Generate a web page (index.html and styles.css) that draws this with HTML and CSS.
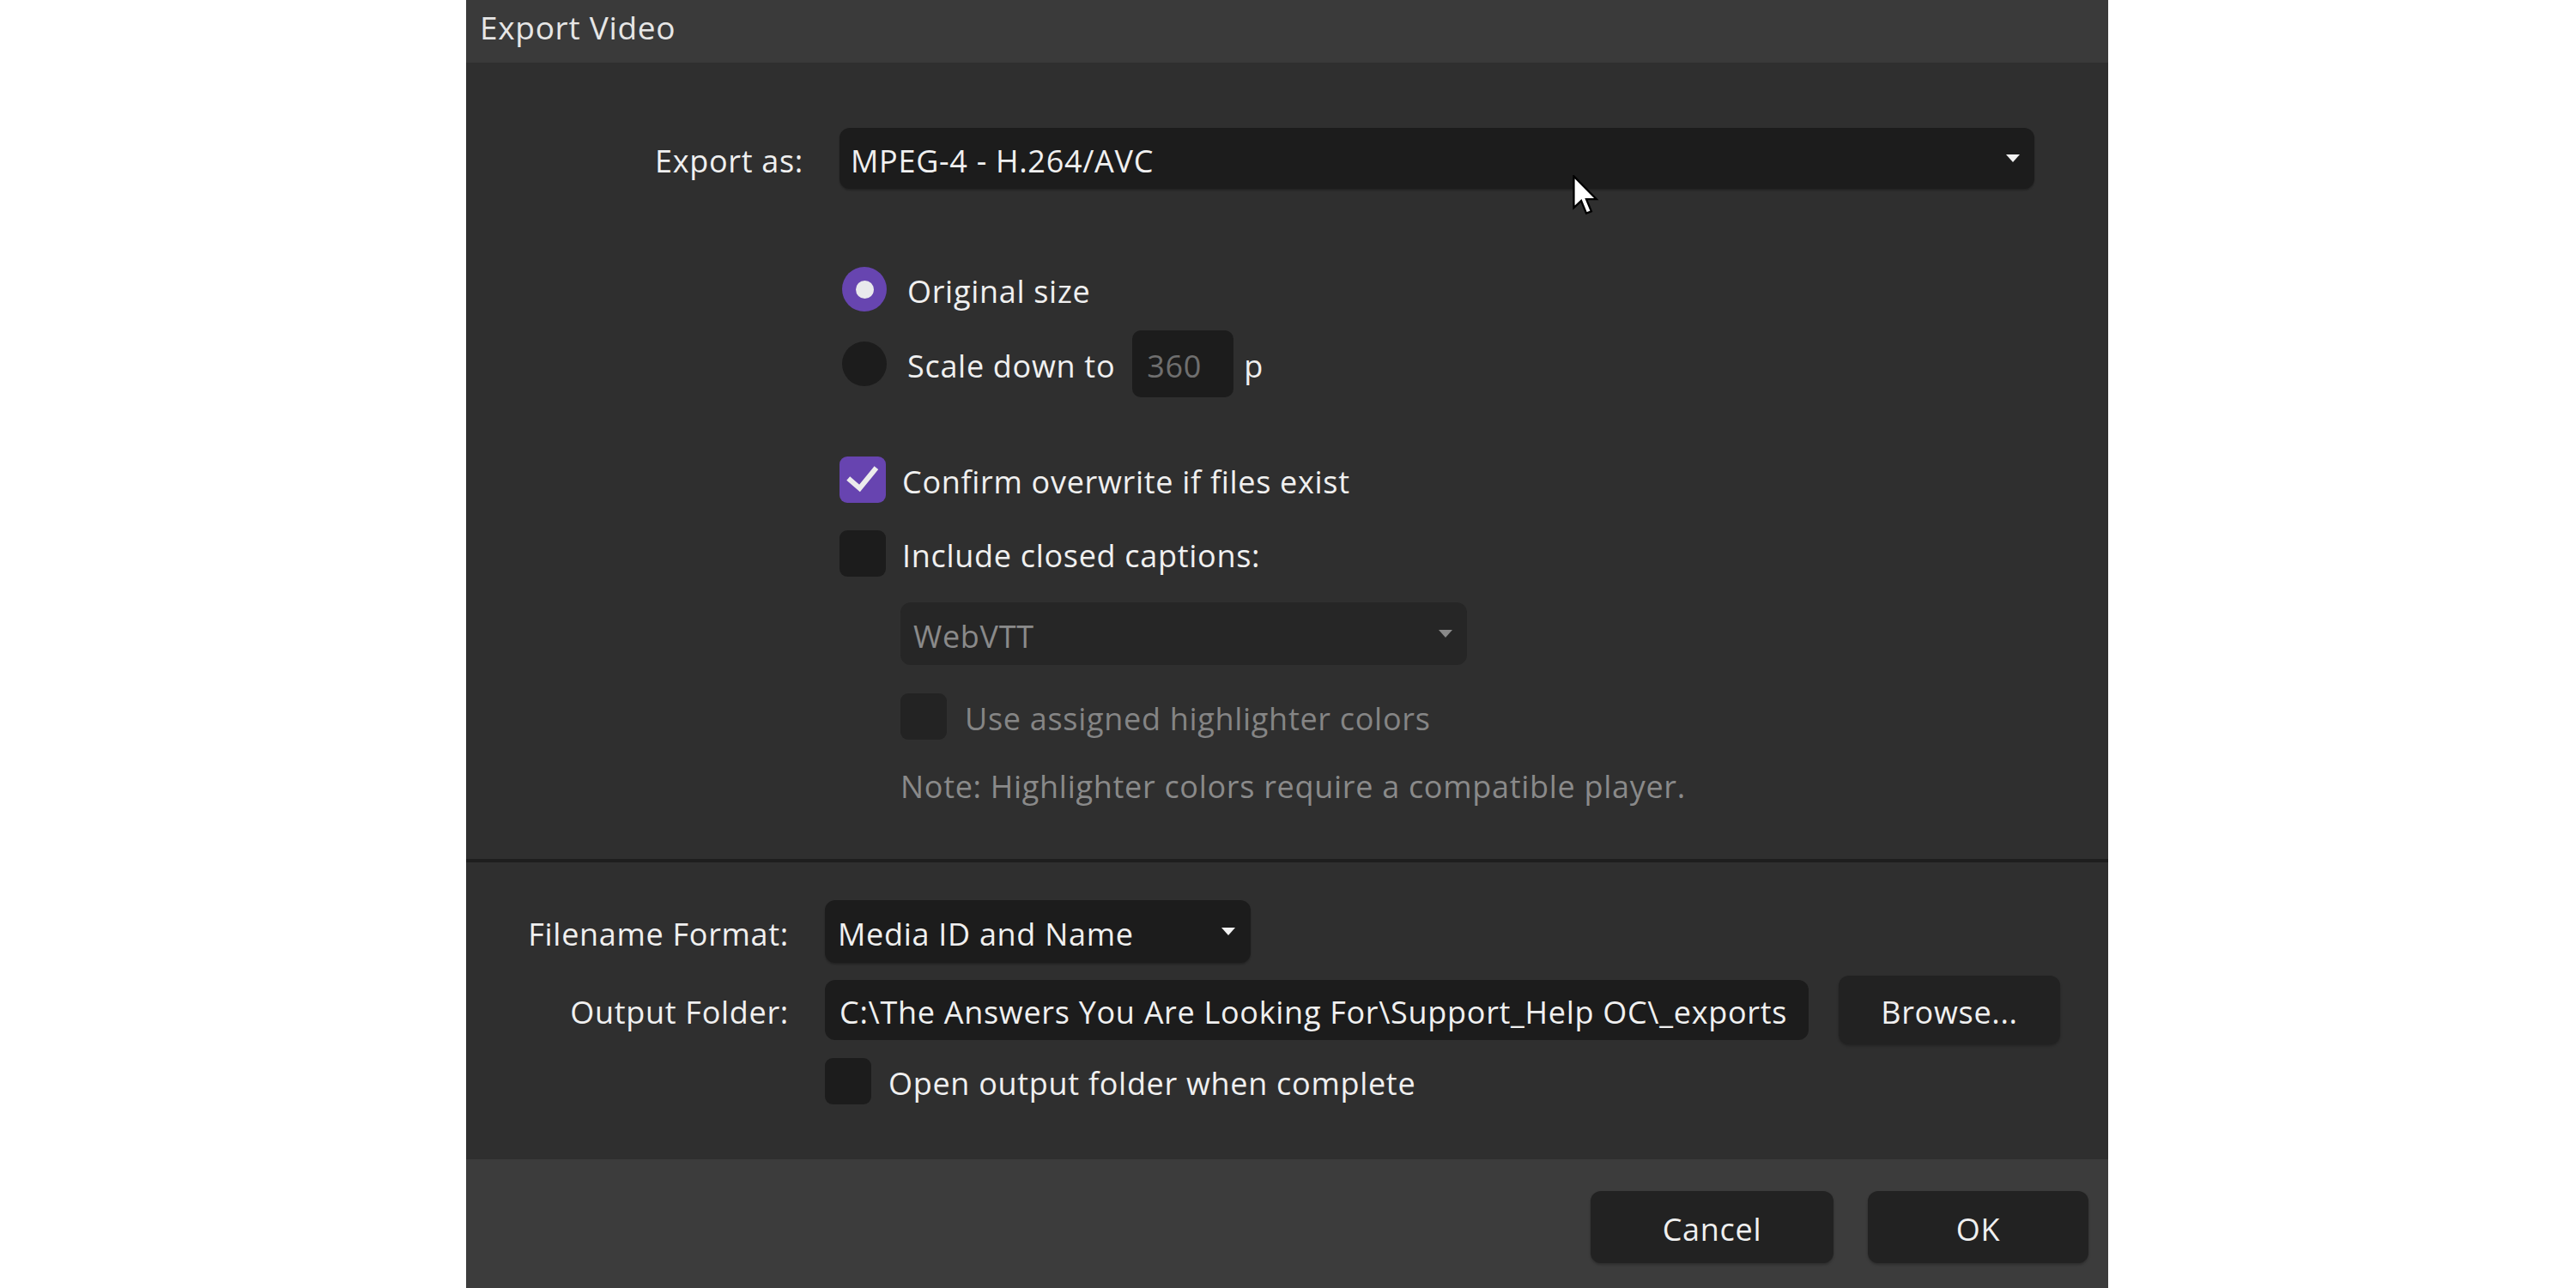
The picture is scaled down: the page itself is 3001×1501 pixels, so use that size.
FILE: index.html
```html
<!DOCTYPE html>
<html lang="en">
<head>
<meta charset="utf-8">
<title>Export Video</title>
<link rel="stylesheet" href="styles.css">
</head>
<body>
<div class="dialog">
  <div class="titlebar">Export Video</div>

  <div class="main">
    <div class="export-row">
      <div class="label">Export as:</div>
      <div class="select select-export">
        <span>MPEG-4 - H.264/AVC</span>
        <span class="arrow"></span>
      </div>
    </div>

    <div class="options">
      <div class="opt radio-row first">
        <span class="radio checked"><span class="dot"></span></span>
        <span class="opt-text">Original size</span>
      </div>
      <div class="opt radio-row second">
        <span class="radio"></span>
        <span class="opt-text">Scale down to</span>
        <span class="num-input">360</span>
        <span class="unit">p</span>
      </div>

      <div class="opt check-row confirm">
        <span class="check checked">
          <svg viewBox="0 0 54 54" width="54" height="54"><path d="M12.5 27.5 L23.5 37 L41 15.5" fill="none" stroke="#ececec" stroke-width="6" stroke-linecap="square" stroke-linejoin="miter"/></svg>
        </span>
        <span class="opt-text">Confirm overwrite if files exist</span>
      </div>
      <div class="opt check-row captions">
        <span class="check"></span>
        <span class="opt-text">Include closed captions:</span>
      </div>

      <div class="indent">
        <div class="select select-vtt disabled">
          <span>WebVTT</span>
          <span class="arrow dim"></span>
        </div>
        <div class="opt check-row highlight">
          <span class="check dis"></span>
          <span class="opt-text dim-text">Use assigned highlighter colors</span>
        </div>
        <div class="note">Note: Highlighter colors require a compatible player.</div>
      </div>
    </div>
  </div>

  <div class="sep"></div>

  <div class="lower">
    <div class="lrow fname-row">
      <div class="llabel">Filename Format:</div>
      <div class="select select-fname">
        <span>Media ID and Name</span>
        <span class="arrow"></span>
      </div>
    </div>
    <div class="lrow out-row">
      <div class="llabel">Output Folder:</div>
      <div class="path-input">C:\The Answers You Are Looking For\Support_Help OC\_exports</div>
      <div class="btn browse">Browse...</div>
    </div>
    <div class="lrow open-row">
      <div class="llabel"></div>
      <div class="opt check-row open">
        <span class="check"></span>
        <span class="opt-text">Open output folder when complete</span>
      </div>
    </div>
  </div>

  <div class="footer">
    <div class="btn cancel">Cancel</div>
    <div class="btn ok">OK</div>
  </div>

  <svg class="cursor" viewBox="0 0 14 22" width="32" height="50">
    <path d="M0.6 0.6 L0.6 16.8 L4.4 13.2 L7 19.6 L9.6 18.6 L7 12.4 L12.2 12.4 Z" fill="#ffffff" stroke="#000000" stroke-width="1" stroke-linejoin="miter"/>
  </svg>
</div>
</body>
</html>
```

FILE: styles.css
```css
* { box-sizing: border-box; }

html, body {
  margin: 0;
  padding: 0;
  background: #ffffff;
}

body {
  font-family: "Open Sans", "Noto Sans", "Liberation Sans", sans-serif;
  font-size: 36px;
  letter-spacing: 0.7px;
  color: #f0f0f0;
}

.dialog {
  position: relative;
  margin-left: 543px;
  width: 1913px;
  height: 1501px;
  display: flex;
  flex-direction: column;
  background: #2f2f2f;
}

.titlebar {
  height: 73px;
  background: #3a3a3a;
  padding-left: 16px;
  display: flex;
  align-items: center;
  font-size: 37px;
  color: #e6e6e6;
  padding-bottom: 10px;
}

.main {
  height: 928px;
  background: #2f2f2f;
  padding-top: 76px;
}

.export-row {
  display: flex;
  align-items: center;
}

.label {
  width: 393px;
  text-align: right;
  margin-right: 42px;
  padding-top: 5px;
}

.select {
  display: flex;
  align-items: center;
  justify-content: space-between;
  background: #1c1c1c;
  border-radius: 12px;
  box-shadow: 0 2px 2px rgba(0,0,0,0.25);
}

.select > span:first-child { padding-top: 5px; }

.select-export {
  width: 1392px;
  height: 71px;
  padding: 0 17px 0 13px;
}

.arrow {
  width: 0;
  height: 0;
  border-left: 8px solid transparent;
  border-right: 8px solid transparent;
  border-top: 9px solid #f2f2f2;
}

.arrow.dim { border-top-color: #8a8a8a; }

.options {
  margin-left: 435px;
  display: flex;
  flex-direction: column;
}

.opt {
  display: flex;
  align-items: center;
}

.opt-text, .unit { padding-top: 5px; }

.radio-row.first { margin-top: 91px; margin-left: 3px; height: 52px; }
.radio-row.second { margin-top: 22px; margin-left: 3px; height: 78px; }

.radio {
  width: 52px;
  height: 52px;
  border-radius: 50%;
  background: #1c1c1c;
  display: flex;
  align-items: center;
  justify-content: center;
  margin-right: 24px;
  flex: none;
}

.radio.checked { background: #6745b0; }

.dot {
  width: 21px;
  height: 21px;
  border-radius: 50%;
  background: #e9e9ec;
}

.num-input {
  width: 118px;
  height: 78px;
  margin-left: 20px;
  background: #1c1c1c;
  border-radius: 10px;
  color: #6f6f6f;
  display: flex;
  align-items: center;
  padding-left: 17px;
  padding-top: 5px;
}

.unit { margin-left: 12px; }

.check {
  width: 54px;
  height: 54px;
  border-radius: 9px;
  background: #1c1c1c;
  margin-right: 19px;
  flex: none;
  display: flex;
}

.check.checked { background: #6744b0; }
.check.dis { background: #232323; margin-right: 21px; }

.check-row.confirm { margin-top: 69px; }
.check-row.captions { margin-top: 32px; }

.indent {
  margin-left: 71px;
  display: flex;
  flex-direction: column;
}

.select-vtt {
  margin-top: 30px;
  width: 660px;
  height: 73px;
  padding: 0 17px 0 15px;
  background: #262626;
  color: #8a8a8a;
  box-shadow: none;
}

.check-row.highlight { margin-top: 33px; }

.dim-text { color: #858585; }

.note {
  margin-top: 28px;
  height: 48px;
  line-height: 48px;
  padding-top: 3px;
  color: #8a8a8a;
}

.sep {
  height: 4px;
  background: #1e1e1e;
}

.lower {
  height: 346px;
  background: #2f2f2f;
  padding-top: 44px;
}

.lrow {
  display: flex;
  align-items: center;
}

.llabel {
  width: 376px;
  margin-right: 42px;
  text-align: right;
  flex: none;
  padding-top: 5px;
}

.select-fname {
  width: 496px;
  height: 73px;
  padding: 0 18px 0 15px;
}

.out-row { margin-top: 15px; height: 80px; }

.path-input {
  width: 1146px;
  height: 70px;
  background: #1c1c1c;
  border-radius: 12px;
  padding-left: 17px;
  padding-top: 5px;
  display: flex;
  align-items: center;
  white-space: nowrap;
  overflow: hidden;
}

.btn {
  background: #222222;
  border-radius: 12px;
  display: flex;
  align-items: center;
  justify-content: center;
  padding-top: 5px;
  box-shadow: 0 2px 3px rgba(0,0,0,0.25);
}

.browse {
  margin-left: 35px;
  width: 258px;
  height: 80px;
}

.open-row { margin-top: 16px; }
.check-row.open .check { margin-right: 20px; }

.footer {
  flex: 1;
  background: #3c3c3c;
  display: flex;
  justify-content: flex-end;
  align-items: flex-start;
  padding-top: 37px;
  padding-right: 23px;
  gap: 40px;
}

.cancel { width: 283px; height: 84px; }
.ok { width: 257px; height: 84px; }

.cursor {
  position: absolute;
  left: 1289px;
  top: 204px;
}
```
